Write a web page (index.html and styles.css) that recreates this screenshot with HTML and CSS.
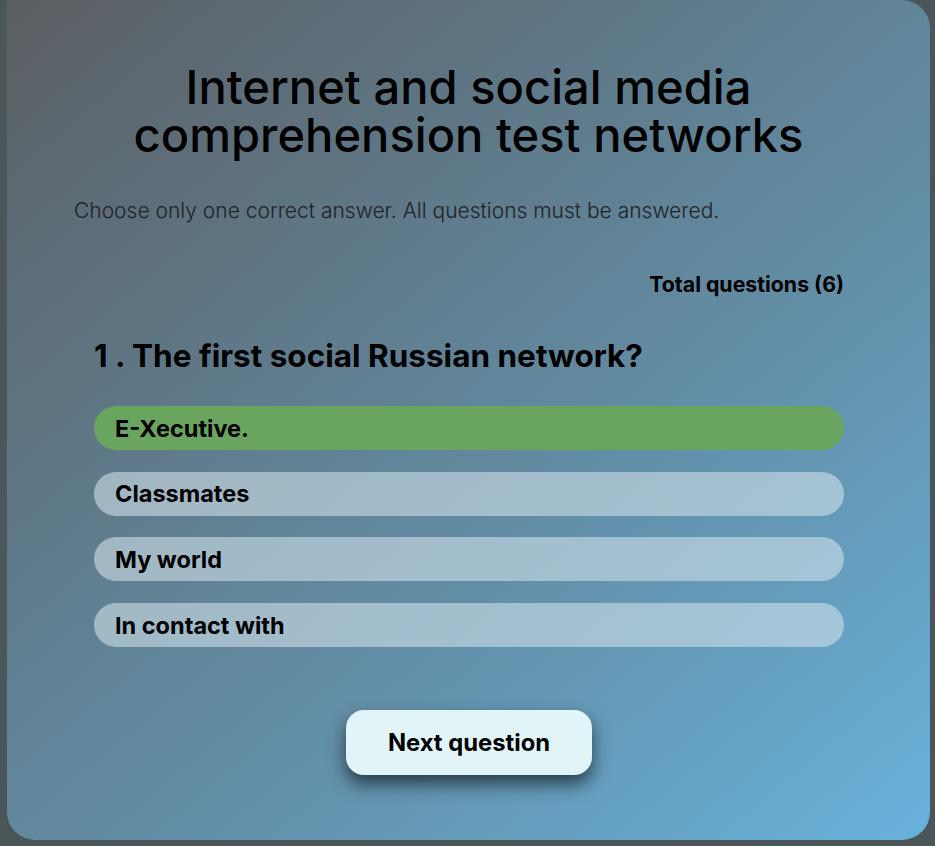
FILE: index.html
```html
<!DOCTYPE html>
<html lang="en">
<head>
<meta charset="utf-8">
<title>Quiz</title>
<link rel="stylesheet" href="styles.css">
</head>
<body>
<main class="card">
  <h1 class="title">Internet and social media<br>comprehension test networks</h1>
  <p class="subtitle">Choose only one correct answer. All questions must be answered.</p>
  <div class="total">Total questions (6)</div>
  <h2 class="question">1 . The first social Russian network?</h2>
  <ul class="options">
    <li class="option option-correct">E-Xecutive.</li>
    <li class="option">Classmates</li>
    <li class="option">My world</li>
    <li class="option">In contact with</li>
  </ul>
  <div class="actions">
    <button class="next">Next question</button>
  </div>
</main>
</body>
</html>
```
FILE: styles.css
```css
html, body {
  margin: 0;
  padding: 0;
}
body {
  background: #4a5658;
  font-family: Inter, "Noto Sans", sans-serif;
  color: #000;
  width: 935px;
  height: 846px;
  overflow: hidden;
}
.card {
  box-sizing: border-box;
  margin: 0 5px 0 7px;
  height: 840px;
  border-radius: 0 28px 28px 28px;
  background: linear-gradient(140deg, #5c5f63 0%, #5f7a8a 35%, #6496b2 70%, #68b2dc 100%);
  padding: 63px 86px 0 67px;
  display: flex;
  flex-direction: column;
}
.title {
  margin: 0;
  padding-left: 19px;
  text-align: center;
  font-size: 47px;
  font-weight: 500;
  line-height: 48px;
  letter-spacing: 0.05px;
}
.subtitle {
  margin: 40px 0 0 0;
  font-size: 21px;
  font-weight: 300;
  color: #1e2226;
  line-height: 24px;
  white-space: nowrap;
}
.total {
  margin-top: 49px;
  text-align: right;
  font-size: 21.3px;
  font-weight: 700;
  line-height: 24px;
}
.question {
  margin: 41px 0 0 20px;
  font-size: 31.5px;
  font-weight: 700;
  line-height: 38px;
}
.options {
  list-style: none;
  margin: 31px 0 0 20px;
  padding: 0;
  display: flex;
  flex-direction: column;
  gap: 21.7px;
}
.option {
  height: 44px;
  border-radius: 22px;
  background: rgba(210, 225, 235, 0.58);
  display: flex;
  align-items: center;
  padding-left: 21px;
  font-size: 23.5px;
  font-weight: 700;
}
.option-correct {
  background: #69a55e;
}
.actions {
  display: flex;
  justify-content: center;
  margin-top: 63px;
  padding-left: 20px;
}
.next {
  width: 246px;
  height: 65px;
  border: none;
  border-radius: 18px;
  background: #e1f5f9;
  font-family: Inter, "Noto Sans", sans-serif;
  font-size: 23.8px;
  font-weight: 700;
  color: #000;
  box-shadow: 0 9px 18px rgba(0, 0, 0, 0.6);
}
```
